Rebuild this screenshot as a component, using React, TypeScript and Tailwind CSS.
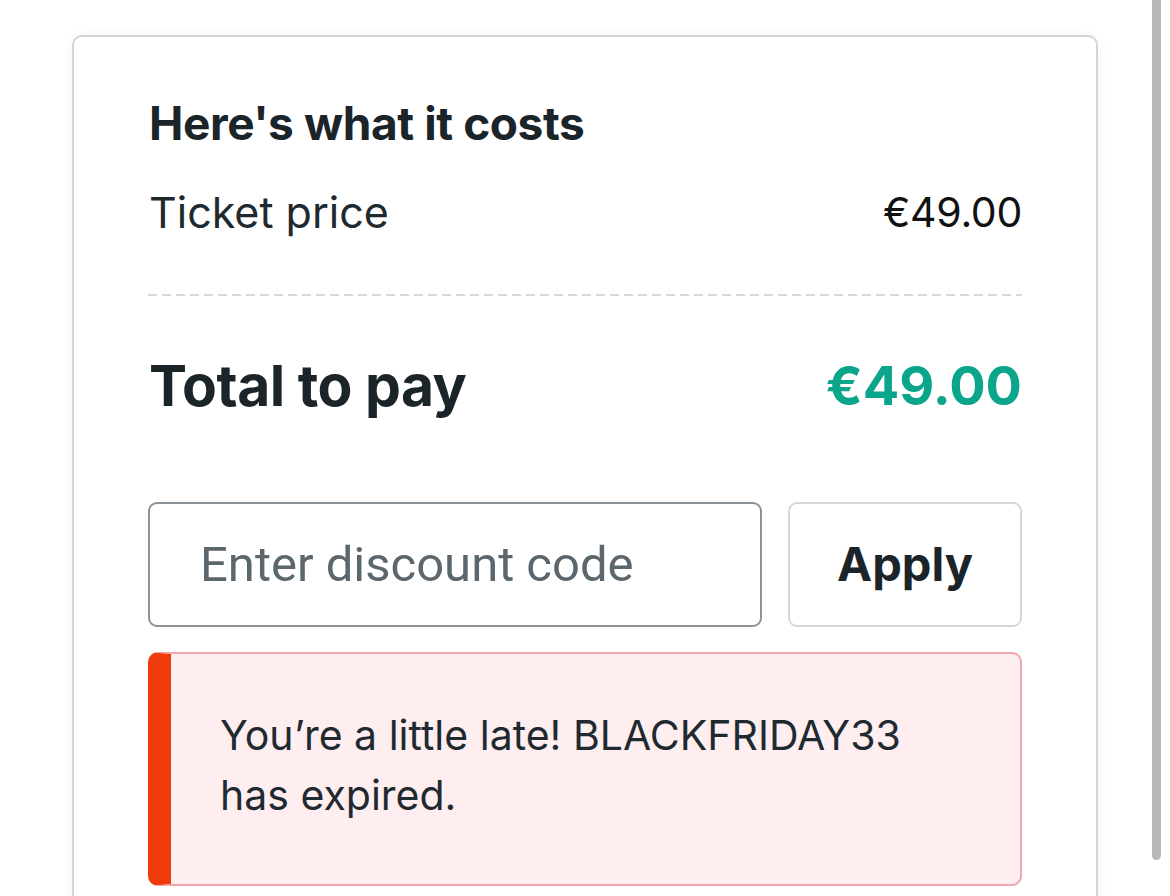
import { useState } from 'react'

export default function App() {
  const [code, setCode] = useState('')

  return (
    <div className="relative h-[896px] overflow-hidden bg-white font-['Inter',sans-serif]">
      {/* fake page scrollbar */}
      <div className="absolute right-[9px] top-0 h-[860px] w-[9px] rounded-b-full bg-[#b8b8b8]" />

      <div className="pl-[72px] pt-[35px]">
        <div className="w-[1026px] min-h-[900px] rounded-[10px] border-2 border-[#d3d5d9] bg-white px-[74px] pt-[62px] shadow-[0_0_14px_rgba(0,0,0,0.04)]">
          {/* Header */}
          <h2 className="pl-[1px] text-[46px] font-bold leading-[48px] tracking-[-0.4px] text-[#1b2429]">Here's what it costs</h2>

          <div className="mt-[41px] flex items-center justify-between leading-[48px]">
            <span className="pl-[1px] text-[43px] text-[#1f2a30]">Ticket price</span>
            <span className="text-[41px] tracking-[-0.3px] text-[#111]">€49.00</span>
          </div>

          <div className="mt-[58px] h-[2px] w-full bg-[repeating-linear-gradient(90deg,#d6d8db_0_9px,transparent_9px_14px)]" />

          {/* Total */}
          <div className="mt-[60px] flex items-center justify-between leading-[60px]">
            <span className="pl-[1px] text-[57px] font-bold tracking-[-0.5px] text-[#1b2429]">Total to pay</span>
            <span className="text-[54px] font-bold text-[#0aa58a]">€49.00</span>
          </div>

          {/* Discount code */}
          <div className="mt-[86px] flex gap-[26px]">
            <input
              value={code}
              onChange={(e) => setCode(e.target.value)}
              placeholder="Enter discount code"
              className="h-[125px] w-[614px] rounded-[9px] border-2 border-[#8b9298] bg-white px-[50px] font-['Roboto',sans-serif] text-[49px] text-[#1f2a30] outline-none placeholder:text-[#5c666d]"
            />
            <button className="h-[125px] flex-1 rounded-[9px] border-2 border-[#d5d7da] bg-white text-[47px] font-bold text-[#1b2429]">
              Apply
            </button>
          </div>

          {/* Error */}
          <div className="mt-[25px] rounded-[10px] border-2 border-l-[23px] border-[#f4a6ad] border-l-[#ef3a0e] bg-[#ffeef0] pb-[59px] pl-[49px] pr-[30px] pt-[51px]">
            <p className="text-[41px] leading-[60px] text-[#1f2a30]">
              You’re a little late! BLACKFRIDAY33
              <br />
              has expired.
            </p>
          </div>
        </div>
      </div>
    </div>
  )
}
